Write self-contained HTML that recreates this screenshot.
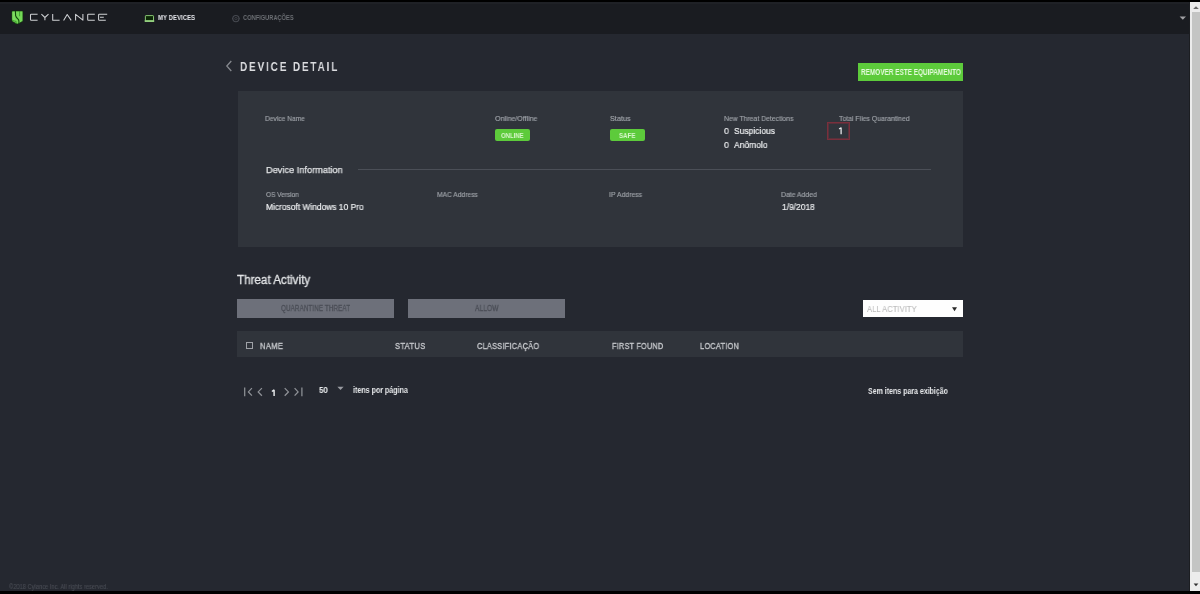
<!DOCTYPE html>
<html><head><meta charset="utf-8">
<style>
*{margin:0;padding:0;box-sizing:border-box}
html,body{width:1200px;height:594px;overflow:hidden;background:#000;font-family:"Liberation Sans",sans-serif;position:relative}
.a{position:absolute}
.t{position:absolute;white-space:nowrap;line-height:1;transform-origin:0 0;will-change:transform}
</style></head><body>
<!-- page bg -->
<div class="a" style="left:0;top:2px;width:1190px;height:589px;background:#252830"></div>
<!-- header -->
<div class="a" style="left:0;top:2px;width:1190px;height:32px;background:#1a1c21"></div>
<div class="a" style="left:0;top:2px;width:1190px;height:2px;background:#1f2126"></div>
<svg class="a" style="left:9px;top:8px" width="18" height="18" viewBox="9 8 18 18">
  <path d="M12.6 11 L22.2 11 Q22.9 11 22.9 11.7 L22.9 20.6 Q22.9 21.2 22.3 21.5 L18.6 23.6 Q17.4 24.3 16.2 23.6 L12.5 21.5 Q11.9 21.2 11.9 20.6 L11.9 11.7 Q11.9 11 12.6 11 Z" fill="#74d957" stroke="#0d3309" stroke-width="0.6"/>
  <path d="M12.2 12 L15 12 L15 20.5 L12.2 19.8Z" fill="#86df6a" opacity="0.5"/>
  <path d="M15.4 11 L15.6 15.6 Q15.9 17.2 18.3 19.4 Q18.9 20.2 18.9 21.6 L18.9 24" stroke="#124a0c" stroke-width="1.1" fill="none"/>
  <path d="M19.6 11 L19.6 16.2" stroke="#2f8a22" stroke-width="0.7" fill="none"/>
  <path d="M12 20.2 Q14.5 21.2 16.1 21.4 L16.1 24" stroke="#2f8a22" stroke-width="0.7" fill="none"/>
</svg>
<svg class="a" style="left:28px;top:10px" width="84" height="14" viewBox="28 10 84 14">
  <g stroke="#cfd1d4" stroke-width="1.05" fill="none" stroke-linejoin="round">
    <path d="M37.6 14.3 L31.2 14.3 Q30.5 14.3 30.5 15 L30.5 19.6 Q30.5 20.3 31.2 20.3 L37.6 20.3"/>
    <path d="M41.4 14.2 L44.9 17.5 L48.5 14.2 M44.9 17.5 L44.9 20.2"/>
    <path d="M52.7 14 L52.7 20.3 L59.6 20.3"/>
    <path d="M63.6 20.4 L67.2 14.5 L71.2 20.4"/>
    <path d="M75.6 20.5 L75.6 14.3 L82.9 20.2 L82.9 14"/>
    <path d="M94.8 14.3 L88.4 14.3 Q87.7 14.3 87.7 15 L87.7 19.6 Q87.7 20.3 88.4 20.3 L94.8 20.3"/>
    <path d="M107.2 14.3 L99.3 14.3 Q98.6 14.3 98.6 15 L98.6 19.6 Q98.6 20.3 99.3 20.3 L105.8 20.3 M100 17.3 L103.8 17.3"/>
  </g>
</svg>
<svg class="a" style="left:143px;top:14px" width="13" height="9" viewBox="143 14 13 9">
  <path d="M145.4 21 L145.4 16.2 Q145.4 15.6 146 15.6 L152.9 15.6 Q153.5 15.6 153.5 16.2 L153.5 21" fill="#0c2806" stroke="#8ccb76" stroke-width="0.95"/>
  <rect x="144.7" y="20.1" width="9.5" height="1.9" fill="#93cf7e"/>
</svg>
<svg class="a" style="left:230px;top:13px" width="12" height="12" viewBox="230 13 12 12">
  <circle cx="235.9" cy="18.6" r="3.1" fill="none" stroke="#464950" stroke-width="1.1"/>
  <circle cx="235.9" cy="18.6" r="1.2" fill="none" stroke="#3e4147" stroke-width="0.9"/>
  <path d="M232.2 18.6 L233 18.6 M238.8 18.6 L239.6 18.6" stroke="#464950" stroke-width="1.3"/>
</svg>
<svg class="a" style="left:1179px;top:16px" width="8" height="5" viewBox="0 0 8 5"><path d="M0.6 0.6 L7 0.6 L3.8 3.8Z" fill="#a0a0a4"/></svg>

<!-- title chevron -->
<svg class="a" style="left:224px;top:59px" width="10" height="14" viewBox="0 0 10 14"><path d="M7.3 2 L2.8 7 L7.3 12" stroke="#85888e" stroke-width="1.3" fill="none"/></svg>
<!-- green button -->
<div class="a" style="left:858px;top:63px;width:105px;height:18px;background:#5dcb3b"></div>

<!-- card -->
<div class="a" style="left:238px;top:91px;width:725px;height:156px;background:#30343b"></div>
<div class="a" style="left:495px;top:129px;width:35px;height:12px;background:#5dcb3b;border-radius:2px"></div>
<div class="a" style="left:610px;top:129px;width:35px;height:12px;background:#5dcb3b;border-radius:2px"></div>
<div class="a" style="left:827px;top:122px;width:23px;height:18px;border:1px solid #7a2f3c;box-shadow:inset 0 0 0 1px rgba(122,47,60,0.55)"></div>
<svg class="a" style="left:835px;top:125px" width="10" height="12" viewBox="835 125 10 12"><path d="M841.1 127.5 L841.1 134.2 M841.1 127.7 L839.1 129.1" stroke="#eceef0" stroke-width="1.25" fill="none"/></svg>
<div class="a" style="left:358px;top:168.5px;width:573px;height:1px;background:#4b4f57"></div>

<!-- threat activity -->
<div class="a" style="left:237px;top:299px;width:157px;height:19px;background:#6d707a"></div>
<div class="a" style="left:408px;top:299px;width:157px;height:19px;background:#6d707a"></div>
<div class="a" style="left:863px;top:300px;width:100px;height:17px;background:#fefefe"></div>
<svg class="a" style="left:951px;top:306px" width="7" height="6" viewBox="0 0 7 6"><path d="M1 1.2 L6 1.2 L3.5 5.2Z" fill="#2a2a2a"/></svg>

<!-- table header -->
<div class="a" style="left:237px;top:331px;width:726px;height:26px;background:#30343b"></div>
<div class="a" style="left:246px;top:342px;width:7px;height:7px;border:1px solid #9fa2a7"></div>

<!-- pagination -->
<svg class="a" style="left:238px;top:382px" width="70" height="18" viewBox="238 382 70 18">
  <g stroke="#8f9297" stroke-width="1.25" fill="none">
    <path d="M244.7 387.6 L244.7 396.3"/><path d="M251.9 388.1 L248.4 391.9 L251.9 395.7"/>
    <path d="M261.9 388.1 L258.2 391.9 L261.9 395.7"/>
    <path d="M284.7 388.1 L288.4 391.9 L284.7 395.7"/>
    <path d="M294.6 388.1 L298.1 391.9 L294.6 395.7"/><path d="M301.9 387.6 L301.9 396.3"/>
  </g>
  <path d="M274.1 389.7 L274.1 396 M274.1 389.9 L271.9 391.5" stroke="#e8eaec" stroke-width="1.45" fill="none"/>
</svg>
<svg class="a" style="left:337px;top:386px" width="8" height="5" viewBox="0 0 8 5"><path d="M0.4 0.8 L6.6 0.8 L3.5 4Z" fill="#9a9ca2"/></svg>

<!-- scrollbar -->
<div class="a" style="left:1189px;top:2px;width:1px;height:589px;background:#1c1e22"></div>
<div class="a" style="left:1190px;top:2px;width:10px;height:589px;background:#ececec"></div>
<div class="a" style="left:1192px;top:12px;width:8px;height:560px;background:#c4c5c4"></div>
<svg class="a" style="left:1192px;top:5px" width="8" height="5" viewBox="0 0 8 5"><path d="M1.2 4 L6.8 4 L4 1.2Z" fill="#6a6a6a"/></svg>
<svg class="a" style="left:1192px;top:582px" width="8" height="5" viewBox="0 0 8 5"><path d="M1.6 1.6 L6.4 1.6 L4 4.2Z" fill="#303030"/></svg>

<div class="t" style="left:157.83px;top:14.00px;font-size:7.27px;font-weight:bold;color:#e4e5ea;transform:scaleX(0.8319)">MY DEVICES</div>
<div class="t" style="left:242.69px;top:15.00px;font-size:6.83px;font-weight:bold;color:#6c6f74;transform:scaleX(0.8333)">CONFIGURAÇÕES</div>
<div class="t" style="left:240.43px;top:60.00px;font-size:13.08px;font-weight:600;color:#dcdde0;letter-spacing:2.4px;transform:scaleX(0.7643)">DEVICE DETAIL</div>
<div class="t" style="left:860.61px;top:69.00px;font-size:8.14px;font-weight:bold;color:#e4fadc;transform:scaleX(0.7889)">REMOVER ESTE EQUIPAMENTO</div>
<div class="t" style="left:265.43px;top:115.00px;font-size:7.27px;font-weight:normal;color:#9fa3a9;-webkit-text-stroke:0.15px #9fa3a9;transform:scaleX(0.9150)">Device Name</div>
<div class="t" style="left:494.64px;top:115.00px;font-size:7.27px;font-weight:normal;color:#9fa3a9;-webkit-text-stroke:0.15px #9fa3a9;transform:scaleX(0.9670)">Online/Offline</div>
<div class="t" style="left:609.52px;top:115.00px;font-size:7.27px;font-weight:normal;color:#9fa3a9;-webkit-text-stroke:0.15px #9fa3a9;transform:scaleX(1.0050)">Status</div>
<div class="t" style="left:724.11px;top:115.00px;font-size:7.27px;font-weight:normal;color:#9fa3a9;-webkit-text-stroke:0.15px #9fa3a9;transform:scaleX(0.9413)">New Threat Detections</div>
<div class="t" style="left:839.18px;top:115.00px;font-size:7.27px;font-weight:normal;color:#9fa3a9;-webkit-text-stroke:0.15px #9fa3a9;transform:scaleX(0.9444)">Total Files Quarantined</div>
<div class="t" style="left:501.08px;top:133.00px;font-size:6.83px;font-weight:bold;color:#d9f6cd;transform:scaleX(0.8713)">ONLINE</div>
<div class="t" style="left:618.77px;top:133.00px;font-size:6.83px;font-weight:bold;color:#d9f6cd;transform:scaleX(0.9014)">SAFE</div>
<div class="t" style="left:724.36px;top:126.00px;font-size:9.74px;font-weight:normal;color:#eceef0;-webkit-text-stroke:0.2px #eceef0;transform:scaleX(0.9081)">0</div>
<div class="t" style="left:733.57px;top:126.00px;font-size:9.74px;font-weight:normal;color:#eceef0;-webkit-text-stroke:0.2px #eceef0;transform:scaleX(0.8692)">Suspicious</div>
<div class="t" style="left:724.36px;top:140.00px;font-size:9.74px;font-weight:normal;color:#eceef0;-webkit-text-stroke:0.2px #eceef0;transform:scaleX(0.9081)">0</div>
<div class="t" style="left:734.00px;top:140.00px;font-size:9.74px;font-weight:normal;color:#eceef0;-webkit-text-stroke:0.2px #eceef0;transform:scaleX(0.8737)">Anômolo</div>
<div class="t" style="left:265.80px;top:165.00px;font-size:9.88px;font-weight:normal;color:#e2e4e6;-webkit-text-stroke:0.25px #e2e4e6;transform:scaleX(0.9321)">Device Information</div>
<div class="t" style="left:266.15px;top:191.00px;font-size:6.98px;font-weight:normal;color:#9fa3a9;-webkit-text-stroke:0.15px #9fa3a9;transform:scaleX(0.9309)">OS Version</div>
<div class="t" style="left:265.78px;top:203.00px;font-size:8.72px;font-weight:normal;color:#eceef0;-webkit-text-stroke:0.2px #eceef0;transform:scaleX(0.9638)">Microsoft Windows 10 Pro</div>
<div class="t" style="left:437.10px;top:191.00px;font-size:6.98px;font-weight:normal;color:#9fa3a9;-webkit-text-stroke:0.15px #9fa3a9;transform:scaleX(0.9581)">MAC Address</div>
<div class="t" style="left:608.68px;top:191.00px;font-size:6.98px;font-weight:normal;color:#9fa3a9;-webkit-text-stroke:0.15px #9fa3a9;transform:scaleX(0.9863)">IP Address</div>
<div class="t" style="left:781.30px;top:192.00px;font-size:7.12px;font-weight:normal;color:#9fa3a9;-webkit-text-stroke:0.15px #9fa3a9;transform:scaleX(0.9633)">Date Added</div>
<div class="t" style="left:781.51px;top:203.00px;font-size:8.87px;font-weight:normal;color:#eceef0;-webkit-text-stroke:0.2px #eceef0;transform:scaleX(0.9493)">1/9/2018</div>
<div class="t" style="left:237.01px;top:274.00px;font-size:12.21px;font-weight:normal;color:#e4e6e8;-webkit-text-stroke:0.3px #e4e6e8;transform:scaleX(0.9541)">Threat Activity</div>
<div class="t" style="left:280.62px;top:305.00px;font-size:8.28px;font-weight:normal;color:#4a4d56;letter-spacing:0.2px;-webkit-text-stroke:0.3px #4a4d56;transform:scaleX(0.7508)">QUARANTINE THREAT</div>
<div class="t" style="left:475.00px;top:305.00px;font-size:8.28px;font-weight:normal;color:#4a4d56;letter-spacing:0.2px;-webkit-text-stroke:0.3px #4a4d56;transform:scaleX(0.7865)">ALLOW</div>
<div class="t" style="left:867.00px;top:305.00px;font-size:9.3px;font-weight:normal;color:#bcbcbc;-webkit-text-stroke:0.1px #bcbcbc;transform:scaleX(0.8251)">ALL ACTIVITY</div>
<div class="t" style="left:260.07px;top:342.00px;font-size:9.16px;font-weight:normal;color:#c5c7cb;letter-spacing:0.3px;-webkit-text-stroke:0.35px #c5c7cb;transform:scaleX(0.8381)">NAME</div>
<div class="t" style="left:395.28px;top:342.00px;font-size:9.16px;font-weight:normal;color:#c5c7cb;letter-spacing:0.3px;-webkit-text-stroke:0.35px #c5c7cb;transform:scaleX(0.8339)">STATUS</div>
<div class="t" style="left:476.60px;top:342.00px;font-size:9.16px;font-weight:normal;color:#c5c7cb;letter-spacing:0.3px;-webkit-text-stroke:0.35px #c5c7cb;transform:scaleX(0.8079)">CLASSIFICAÇÃO</div>
<div class="t" style="left:612.10px;top:342.00px;font-size:9.16px;font-weight:normal;color:#c5c7cb;letter-spacing:0.3px;-webkit-text-stroke:0.35px #c5c7cb;transform:scaleX(0.7953)">FIRST FOUND</div>
<div class="t" style="left:700.20px;top:342.00px;font-size:9.16px;font-weight:normal;color:#c5c7cb;letter-spacing:0.3px;-webkit-text-stroke:0.35px #c5c7cb;transform:scaleX(0.8064)">LOCATION</div>
<div class="t" style="left:319.47px;top:386.00px;font-size:9.16px;font-weight:bold;color:#e6e8ea;transform:scaleX(0.8747)">50</div>
<div class="t" style="left:353.38px;top:386.00px;font-size:8.58px;font-weight:bold;color:#e6e8ea;transform:scaleX(0.8274)">itens por página</div>
<div class="t" style="left:867.50px;top:387.00px;font-size:8.58px;font-weight:bold;color:#e6e8ea;transform:scaleX(0.8175)">Sem itens para exibição</div>
<div class="t" style="left:8.50px;top:583.00px;font-size:6.98px;font-weight:normal;color:#474a52;-webkit-text-stroke:0.15px #474a52;transform:scaleX(0.8222)">©2018 Cylance Inc. All rights reserved.</div>
</body></html>
